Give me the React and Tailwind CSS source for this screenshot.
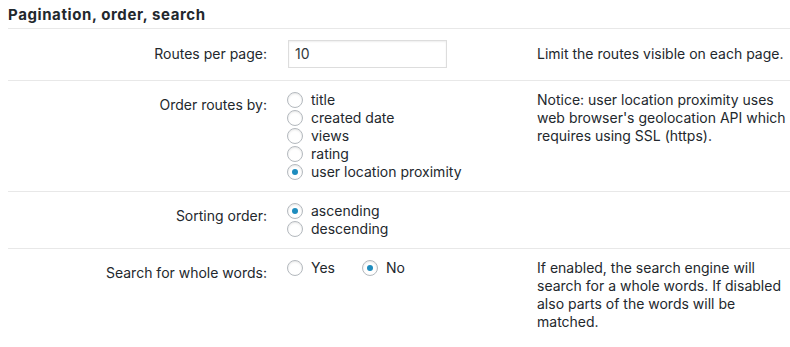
import React from "react";

const Radio = ({ checked, label }) => (
  <label className="flex items-center h-[18px]">
    <span className="w-4 h-4 rounded-full border border-[#b4b9be] bg-white shadow-[inset_0_1px_2px_rgba(0,0,0,0.1)] flex items-center justify-center mr-2 -mt-[1px] shrink-0">
      {checked && <span className="w-[6px] h-[6px] rounded-full bg-[#1e8cbe]" />}
    </span>
    <span>{label}</span>
  </label>
);

const Row = ({ label, children, desc, last, pad = "pt-[10px] pb-[10px]" }) => (
  <div
    className={
      "grid grid-cols-[259px_230px_1fr] gap-x-5 " +
      pad +
      (last ? "" : " border-b border-[#e8e8e8]")
    }
  >
    <div className="text-right pt-[5px]">{label}</div>
    <div>{children}</div>
    <div>{desc}</div>
  </div>
);

export default function App() {
  return (
    <div
      className="bg-white text-[#23282d] text-[14px] leading-[18px] pl-2 w-[790px] h-[347px] overflow-hidden"
      style={{ fontFamily: 'Inter, "Liberation Sans", sans-serif' }}
    >
      <h2 className="font-bold text-[15px] tracking-[0.6px] leading-[20px] pt-[5px] pb-[3px] border-b border-[#e8e8e8]">
        Pagination, order, search
      </h2>

      <Row
        pad="pt-[11px] pb-[12px]"
        label={<span className="block pt-[0px]">Routes per page:</span>}
        desc={<span className="block pt-[5px] whitespace-nowrap">Limit the routes visible on each page.</span>}
      >
        <div className="ml-px w-[159px] h-[28px] border border-[#dddddd] shadow-[inset_0_1px_2px_rgba(0,0,0,0.07)] px-[6px] flex items-center text-[#32373c]">
          10
        </div>
      </Row>

      <Row
        label="Order routes by:"
        desc="Notice: user location proximity uses web browser's geolocation API which requires using SSL (https)."
      >
        <Radio label="title" />
        <Radio label="created date" />
        <Radio label="views" />
        <Radio label="rating" />
        <Radio checked label="user location proximity" />
      </Row>

      <Row label="Sorting order:">
        <Radio checked label="ascending" />
        <Radio label="descending" />
      </Row>

      <Row
        label="Search for whole words:"
        last
        desc="If enabled, the search engine will search for a whole words. If disabled also parts of the words will be matched."
      >
        <div className="flex gap-[27px]">
          <Radio label="Yes" />
          <Radio checked label="No" />
        </div>
      </Row>
    </div>
  );
}
